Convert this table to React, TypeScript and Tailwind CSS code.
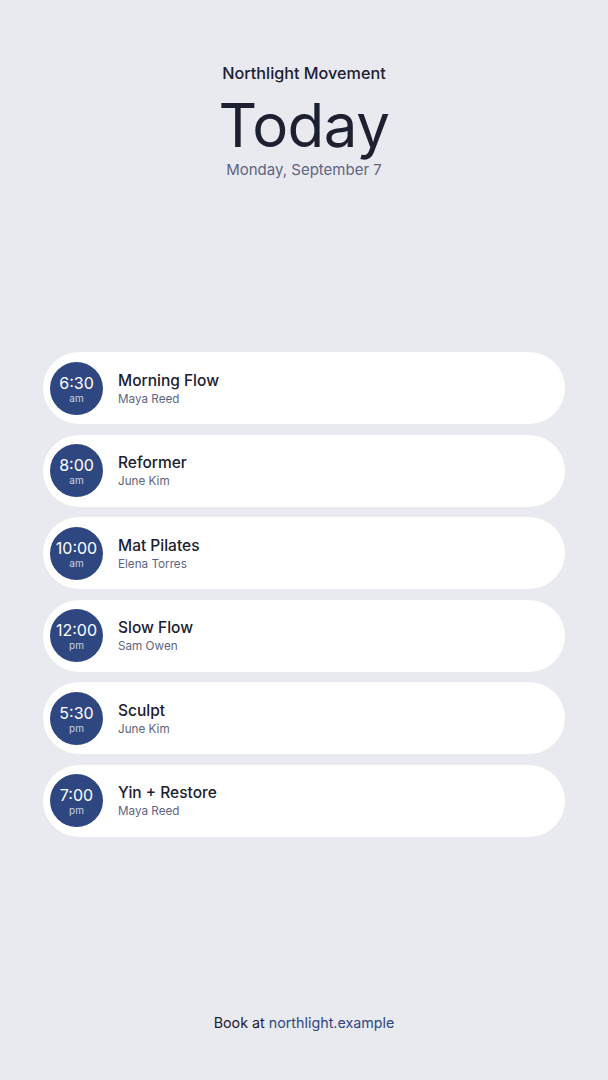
import React from 'react'

const classes = [
  { time: '6:30', period: 'am', name: 'Morning Flow', teacher: 'Maya Reed' },
  { time: '8:00', period: 'am', name: 'Reformer', teacher: 'June Kim' },
  { time: '10:00', period: 'am', name: 'Mat Pilates', teacher: 'Elena Torres' },
  { time: '12:00', period: 'pm', name: 'Slow Flow', teacher: 'Sam Owen' },
  { time: '5:30', period: 'pm', name: 'Sculpt', teacher: 'June Kim' },
  { time: '7:00', period: 'pm', name: 'Yin + Restore', teacher: 'Maya Reed' },
]

export default function App() {
  return (
    <div
      className="h-[1080px] w-[608px] bg-[#e9eaf0] flex flex-col items-center text-[#1c2030]"
      style={{ fontFamily: 'Inter, "Noto Sans", sans-serif' }}
    >
      <header className="pt-[61px] flex flex-col items-center">
        <p className="text-[16.2px] leading-6 font-medium">Northlight Movement</p>
        <h1 className="mt-[10px] text-[60px] leading-[60px] font-normal tracking-[-0.5px]">Today</h1>
        <p className="mt-[4px] text-[15px] leading-[22px] text-[#5d6580]">Monday, September 7</p>
      </header>

      <main className="flex-1 w-full flex flex-col justify-center px-[43px] gap-[10.6px] pb-[5px]">
        {classes.map((c) => (
          <div
            key={c.time}
            className="h-[72px] bg-white rounded-full flex items-center pl-[7px] gap-[15px]"
          >
            <div className="w-[53px] h-[53px] rounded-full bg-[#2f4780] text-white flex flex-col items-center justify-center pt-[1px]">
              <span className="text-[16px] leading-[18px]">{c.time}</span>
              <span className="text-[10px] leading-3 text-[#c9d1e6]">{c.period}</span>
            </div>
            <div className="flex flex-col pt-[1px]">
              <span className="text-[15.5px] leading-5 font-medium">{c.name}</span>
              <span className="text-[11.7px] leading-4 text-[#5d6580]">{c.teacher}</span>
            </div>
          </div>
        ))}
      </main>

      <footer className="pb-[47px] text-[14.3px] leading-5">
        Book at <span className="text-[#2f4780]">northlight.example</span>
      </footer>
    </div>
  )
}
